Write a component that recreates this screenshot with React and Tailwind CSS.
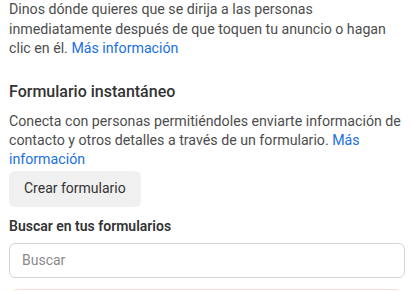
export default function App() {
  return (
    <div className="w-[412px] h-[291px] overflow-hidden bg-white" style={{ fontFamily: 'Roboto, "Noto Sans", sans-serif' }}>
      <div className="pl-[9px] pr-[7px]">
        <p className="text-[14.2px] leading-[19.5px] text-[#4d4d4d]">
          Dinos dónde quieres que se dirija a las personas inmediatamente después de que toquen tu anuncio o hagan clic en él. <a className="text-[#1b6fe0]">Más información</a>
        </p>
        <h2 className="mt-[23px] text-[16px] leading-[20px] font-medium text-[#333]">Formulario instantáneo</h2>
        <p className="mt-[10px] text-[14.2px] leading-[19px] text-[#4d4d4d]">
          Conecta con personas permitiéndoles enviarte información de contacto y otros detalles a través de un formulario. <a className="text-[#1b6fe0]">Más información</a>
        </p>
        <button className="mt-[2px] h-[36px] px-[15px] rounded-[6px] bg-[#f0f0f0] text-[14px] text-[#333]">Crear formulario</button>
        <div className="mt-[11px] text-[14px] leading-[17px] font-semibold text-[#333]">Buscar en tus formularios</div>
        <div className="mt-[8px] h-[35px] w-[396px] rounded-[6px] border border-[#d4d4d4] flex items-center pl-[12px] text-[14px] text-[#8a8a8a]">Buscar</div>
        <div className="mt-[11px] mx-[3px] h-[20px] rounded-t-[6px] border-t border-[#fbdcd6]"></div>
      </div>
    </div>
  );
}
